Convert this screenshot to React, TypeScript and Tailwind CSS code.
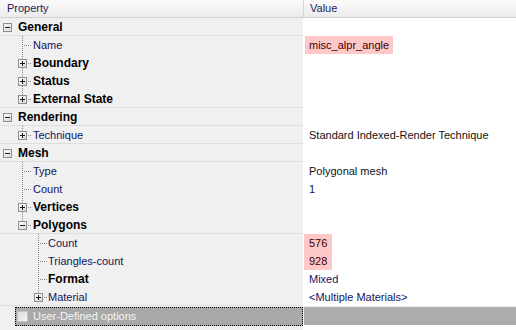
import React from "react";

type Tree =
  | { kind: "cat" }
  | { kind: "leaf"; level: 1 | 2; last?: boolean }
  | { kind: "node"; level: 1 | 2; last?: boolean; open?: boolean };

interface Row {
  label: string;
  bold?: boolean;
  tree: Tree;
  value?: string;
  valueTone?: "black" | "navy";
  pink?: "name" | "num";
  line?: boolean;
}

const rows: Row[] = [
  { label: "General", bold: true, tree: { kind: "cat" }, line: true },
  { label: "Name", tree: { kind: "leaf", level: 1 }, value: "misc_alpr_angle", pink: "name" },
  { label: "Boundary", bold: true, tree: { kind: "node", level: 1 } },
  { label: "Status", bold: true, tree: { kind: "node", level: 1 } },
  { label: "External State", bold: true, tree: { kind: "node", level: 1, last: true }, line: true },
  { label: "Rendering", bold: true, tree: { kind: "cat" }, line: true },
  { label: "Technique", tree: { kind: "node", level: 1, last: true }, value: "Standard Indexed-Render Technique", valueTone: "black", line: true },
  { label: "Mesh", bold: true, tree: { kind: "cat" }, line: true },
  { label: "Type", tree: { kind: "leaf", level: 1 }, value: "Polygonal mesh", valueTone: "black" },
  { label: "Count", tree: { kind: "leaf", level: 1 }, value: "1", valueTone: "navy" },
  { label: "Vertices", bold: true, tree: { kind: "node", level: 1 } },
  { label: "Polygons", bold: true, tree: { kind: "node", level: 1, last: true, open: true }, line: true },
  { label: "Count", tree: { kind: "leaf", level: 2 }, value: "576", pink: "num" },
  { label: "Triangles-count", tree: { kind: "leaf", level: 2 }, value: "928", pink: "num" },
  { label: "Format", bold: true, tree: { kind: "leaf", level: 2 }, value: "Mixed", valueTone: "navy" },
  { label: "Material", tree: { kind: "node", level: 2, last: true }, value: "<Multiple Materials>", valueTone: "navy", line: true },
];

// small XP-style expander box, 9x9
const Box = ({ x, open }: { x: number; open: boolean }) => (
  <g>
    <defs>
      <linearGradient id="bx" x1="0" y1="0" x2="1" y2="1">
        <stop offset="0" stopColor="#ffffff" />
        <stop offset="1" stopColor="#d6d6d6" />
      </linearGradient>
    </defs>
    <rect x={x + 0.5} y={5.5} width={8} height={8} fill="url(#bx)" stroke="#8f8f8f" />
    <line x1={x + 2} y1={9.5} x2={x + 7} y2={9.5} stroke="#1a1a1a" />
    {!open && <line x1={x + 4.5} y1={7} x2={x + 4.5} y2={12} stroke="#1a1a1a" />}
  </g>
);

const dot = { stroke: "#8a8a8a", strokeDasharray: "1 1", shapeRendering: "crispEdges" as const };

const TreeGlyph = ({ tree }: { tree: Tree }) => {
  if (tree.kind === "cat") {
    return (
      <svg width={18} height={18} className="shrink-0">
        <Box x={3} open />
      </svg>
    );
  }
  const cx = tree.level === 1 ? 22 : 38;
  const w = tree.level === 1 ? 33 : 48;
  return (
    <svg width={w} height={18} className="shrink-0">
      {tree.kind === "leaf" ? (
        <>
          <line x1={cx + 0.5} y1={0} x2={cx + 0.5} y2={tree.last ? 10 : 18} {...dot} />
          <line x1={cx + 2} y1={9.5} x2={w - 1} y2={9.5} {...dot} />
        </>
      ) : (
        <>
          <line x1={cx + 0.5} y1={0} x2={cx + 0.5} y2={5} {...dot} />
          {!tree.last && <line x1={cx + 0.5} y1={14} x2={cx + 0.5} y2={18} {...dot} />}
          <line x1={cx + 6} y1={9.5} x2={w - 1} y2={9.5} {...dot} />
          <Box x={cx - 4} open={!!tree.open} />
        </>
      )}
    </svg>
  );
};

const PropRow = ({ row }: { row: Row }) => (
  <div
    className={`grid grid-cols-[303px_1fr] h-[18px] shrink-0 ${row.line ? "border-b border-[#dedede]" : ""}`}
  >
    <div className="flex items-stretch min-w-0">
      <TreeGlyph tree={row.tree} />
      <span
        className={
          row.bold
            ? "pt-px text-[12px] font-bold text-black leading-[17px]"
            : "pt-px text-[11px] text-[#14145a] leading-[17px]"
        }
      >
        {row.label}
      </span>
    </div>
    <div className="bg-white flex items-stretch">
      {row.value && row.pink === "name" && (
        <span className="ml-[2px] px-[4px] pt-px bg-[#ffc8c8] text-[#3c0000] leading-[17px]">
          {row.value}
        </span>
      )}
      {row.value && row.pink === "num" && (
        <span className="ml-[1px] w-[28px] pl-[5px] pt-px bg-[#ffc8c8] text-[#3c0000] leading-[17px]">
          {row.value}
        </span>
      )}
      {row.value && !row.pink && (
        <span
          className={`pl-[6px] pt-px leading-[17px] ${row.valueTone === "black" ? "text-[#111]" : "text-[#14145a]"}`}
        >
          {row.value}
        </span>
      )}
    </div>
  </div>
);

export default function App() {
  return (
    <div
      className="w-[516px] h-[330px] overflow-hidden bg-[#f0f0f0] text-[11px] flex flex-col"
      style={{ fontFamily: '"Liberation Sans", Arial, sans-serif' }}
    >
      {/* column header */}
      <div className="grid grid-cols-[303px_1fr] h-[18px] shrink-0 bg-gradient-to-b from-[#fbfbfb] to-[#ebebeb] border-b border-[#d2d2d2]">
        <div className="pl-[7px] leading-[17px] text-[#1e2457]">Property</div>
        <div className="pl-[6px] leading-[17px] text-[#1e2457] border-l border-[#d8d8d8]">Value</div>
      </div>

      {rows.map((r, i) => (
        <PropRow key={i} row={r} />
      ))}

      {/* selected checkbox row */}
      <div className="grid grid-cols-[303px_1fr] h-[19px] shrink-0 py-[1px]">
        <div className="pl-[15px] flex">
          <div className="flex-1 flex items-center bg-[#a9a9a9] border border-dotted border-black">
            <span className="ml-[1px] w-[11px] h-[11px] border border-[#c4c4c4] bg-gradient-to-br from-[#dcdcdc] to-[#f4f4f4]" />
            <span className="ml-[5px] text-[#f4f4f4]">User-Defined options</span>
          </div>
        </div>
        <div className="bg-[#acacac] ml-[1px]" />
      </div>
      <div className="grid grid-cols-[303px_1fr] flex-1">
        <div />
        <div className="bg-white" />
      </div>
    </div>
  );
}
